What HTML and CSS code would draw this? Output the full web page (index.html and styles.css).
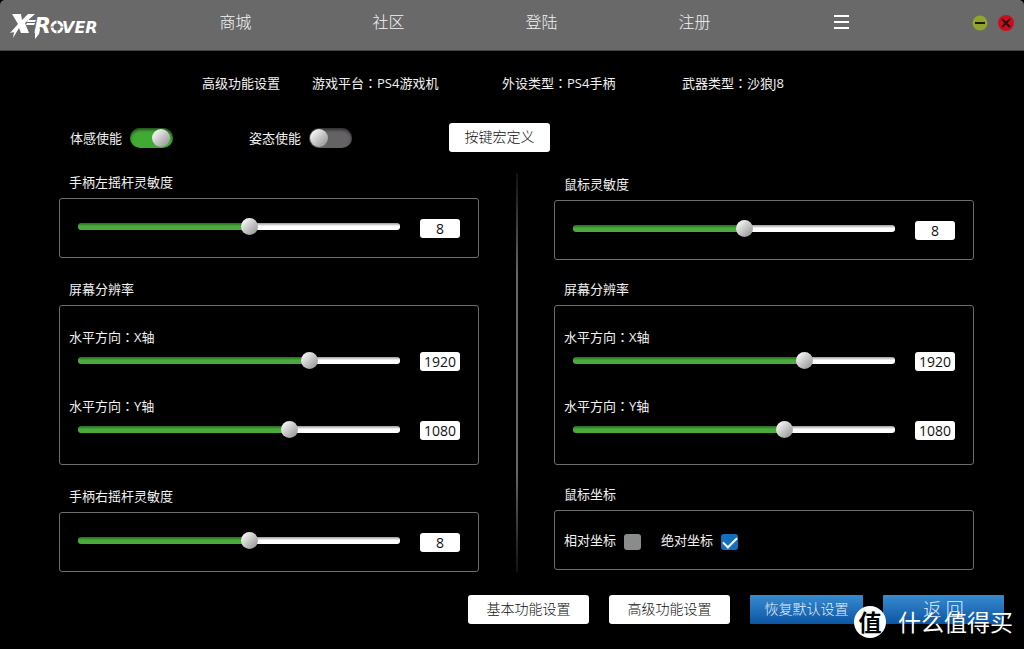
FILE: index.html
```html
<!DOCTYPE html>
<html lang="zh-CN">
<head>
<meta charset="utf-8">
<meta name="viewport" content="width=device-width, initial-scale=1">
<title>X-Rover 高级功能设置</title>
<link rel="stylesheet" href="styles.css">
</head>
<body>
<div class="app">
  <header class="topbar">
    <a class="logo" href="#" aria-label="X-Rover">
      <svg width="90" height="30" viewBox="0 0 90 30">
        <path class="logo-fill" d="M2 3h9l1 6 6-6h7l-10 9 4 10h-8l-2-5-6 10 1-6-4 1 8-9z"/>
        <path class="logo-fill" d="M17 12h8l-1 2h-8zM18 9h8l-1 2h-8z"/>
        <text class="logo-r" x="24" y="22">R</text>
        <path class="logo-fill" d="M25 18h5l-1 5-4 5z"/>
        <circle class="logo-ring" cx="47" cy="16" r="5"/>
        <path class="logo-cut" d="M47 8v6M47 18v6M39 16h6M49 16h6"/>
        <text class="logo-text" x="52" y="22">VER</text>
      </svg>
    </a>
    <nav class="nav">
      <a href="#">商城</a>
      <a href="#">社区</a>
      <a href="#">登陆</a>
      <a href="#">注册</a>
      <button class="menu" type="button" aria-label="菜单">
        <svg width="16" height="16" viewBox="0 0 16 16"><path d="M0 2h15M0 8h15M0 14h15"/></svg>
      </button>
    </nav>
    <div class="window-buttons">
      <button type="button" aria-label="最小化"><svg width="16" height="16" viewBox="0 0 16 16"><circle class="min" cx="8" cy="8" r="7.5"/><path d="M3 8h10"/></svg></button>
      <button type="button" aria-label="关闭"><svg width="16" height="16" viewBox="0 0 16 16"><circle class="close" cx="8" cy="8" r="8"/><path d="M4 4l8 8M12 4l-8 8"/></svg></button>
    </div>
  </header>

  <main class="main">
    <div class="info">
      <span>高级功能设置</span>
      <span>游戏平台<span class="colon" lang="zh-TW">：</span>PS4游戏机</span>
      <span>外设类型<span class="colon" lang="zh-TW">：</span>PS4手柄</span>
      <span>武器类型<span class="colon" lang="zh-TW">：</span>沙狼J8</span>
    </div>
    <div class="toggles">
      <label class="toggle">体感使能<input class="switch" type="checkbox" role="switch" checked></label>
      <label class="toggle">姿态使能<input class="switch" type="checkbox" role="switch"></label>
      <button class="btn macro" type="button">按键宏定义</button>
    </div>

    <div class="columns">
      <div class="column">
        <section class="group">
          <h2>手柄左摇杆灵敏度</h2>
          <div class="panel">
            <div class="row"><input class="slider" type="range" min="0" max="15" value="8" aria-label="手柄左摇杆灵敏度" style="--fill:53%"><input class="value" type="text" value="8" aria-label="手柄左摇杆灵敏度数值"></div>
          </div>
        </section>
        <section class="group">
          <h2>屏幕分辨率</h2>
          <div class="panel tall">
            <label for="lx">水平方向<span class="colon" lang="zh-TW">：</span>X轴</label>
            <div class="row"><input class="slider" id="lx" type="range" min="0" max="2627" value="1920" style="--fill:72%"><input class="value" type="text" value="1920" aria-label="X轴数值"></div>
            <label for="ly">水平方向<span class="colon" lang="zh-TW">：</span>Y轴</label>
            <div class="row"><input class="slider" id="ly" type="range" min="0" max="1623" value="1080" style="--fill:66%"><input class="value" type="text" value="1080" aria-label="Y轴数值"></div>
          </div>
        </section>
        <section class="group">
          <h2>手柄右摇杆灵敏度</h2>
          <div class="panel">
            <div class="row"><input class="slider" type="range" min="0" max="15" value="8" aria-label="手柄右摇杆灵敏度" style="--fill:53%"><input class="value" type="text" value="8" aria-label="手柄右摇杆灵敏度数值"></div>
          </div>
        </section>
      </div>

      <div class="divider"></div>

      <div class="column right">
        <section class="group">
          <h2>鼠标灵敏度</h2>
          <div class="panel">
            <div class="row"><input class="slider" type="range" min="0" max="15" value="8" aria-label="鼠标灵敏度" style="--fill:53%"><input class="value" type="text" value="8" aria-label="鼠标灵敏度数值"></div>
          </div>
        </section>
        <section class="group">
          <h2>屏幕分辨率</h2>
          <div class="panel tall">
            <label for="rx">水平方向<span class="colon" lang="zh-TW">：</span>X轴</label>
            <div class="row"><input class="slider" id="rx" type="range" min="0" max="2627" value="1920" style="--fill:72%"><input class="value" type="text" value="1920" aria-label="X轴数值"></div>
            <label for="ry">水平方向<span class="colon" lang="zh-TW">：</span>Y轴</label>
            <div class="row"><input class="slider" id="ry" type="range" min="0" max="1623" value="1080" style="--fill:66%"><input class="value" type="text" value="1080" aria-label="Y轴数值"></div>
          </div>
        </section>
        <section class="group">
          <h2>鼠标坐标</h2>
          <div class="panel checks">
            <label>相对坐标<input class="check" type="checkbox"></label>
            <label>绝对坐标<input class="check" type="checkbox" checked></label>
          </div>
        </section>
      </div>
    </div>
  </main>

  <footer class="actions">
    <button class="btn" type="button">基本功能设置</button>
    <button class="btn" type="button">高级功能设置</button>
    <button class="btn blue reset" type="button">恢复默认设置</button>
    <button class="btn blue back" type="button">返 回</button>
    <div class="watermark"><span class="badge">值</span><span>什么值得买</span></div>
  </footer>
</div>
</body>
</html>
```
FILE: styles.css
```css
* { box-sizing: border-box; }
body {
  margin: 0;
  background: #000;
  color: #f2f2f2;
  font: 13px/20px "Open Sans", "Noto Sans CJK SC", sans-serif;
}
button, input { font: inherit; margin: 0; }
button { padding: 0; border: 0; cursor: pointer; }
.app { min-height: 100vh; display: flex; flex-direction: column; }
.colon { font-family: "Noto Sans CJK TC", sans-serif; line-height: 1; }

.topbar {
  display: flex;
  align-items: center;
  height: 51px;
  padding: 0 10px;
  background: #696969;
  border-bottom: 1px solid #444;
  border-radius: 5px 5px 0 0;
}
.logo { flex: 0 0 149px; height: 30px; margin-top: 2px; }
.logo svg { display: block; }
.logo-fill { fill: #fff; }
.logo-r, .logo-text { fill: #fff; font: italic 700 22px "DejaVu Sans", sans-serif; }
.logo-text { font-size: 16px; }
.logo-ring { fill: none; stroke: #fff; stroke-width: 3; }
.logo-cut { stroke: #696969; stroke-width: 1; }
.nav { flex: 1; display: flex; align-items: center; padding-bottom: 6px; }
.nav a, .menu { flex: 0 1 153px; text-align: center; }
.nav a { color: #f4f4f4; font-size: 16px; font-weight: 300; text-decoration: none; }
.menu { height: 20px; padding-right: 12px; background: none; }
.menu svg { display: block; margin: 2px auto; }
.menu path { stroke: #fff; stroke-width: 2; }
.window-buttons { display: flex; gap: 10px; padding-bottom: 5px; }
.window-buttons button { height: 16px; background: none; }
.window-buttons svg { display: block; }
.window-buttons path { stroke: #211; stroke-width: 2; fill: none; }
.min { fill: #90a52b; }
.close { fill: #d20a20; }

.main { padding: 22px 50px 0 59px; }
.info { display: grid; grid-template-columns: 110px 190px 180px auto; padding-left: 143px; white-space: nowrap; }
.toggles { display: flex; align-items: center; padding-left: 11px; margin-top: 30px; }
.toggle { display: flex; align-items: center; gap: 8px; width: 179px; }
.switch {
  appearance: none;
  width: 43px;
  height: 20px;
  border-radius: 10px;
  background: #646264;
  box-shadow: inset 0 2px 3px #0008;
}
.switch::before {
  content: "";
  display: block;
  width: 18px;
  height: 18px;
  margin: 1px;
  border-radius: 50%;
  background: linear-gradient(135deg, #f4f4f4 15%, #c8c8c8 50%, #8c8c8c);
}
.switch:checked { background: #41aa35; }
.switch:checked::before { margin-left: 22px; }

.btn {
  height: 29px;
  width: 121px;
  padding-bottom: 2px;
  border-radius: 3px;
  background: #fff;
  color: #111;
  font-size: 14px;
  font-weight: 300;
}
.macro { width: 101px; margin-left: 21px; }

.columns { display: grid; grid-template-columns: 1fr 75px 1fr; margin-top: 21px; }
.divider {
  justify-self: center;
  width: 2px;
  background: linear-gradient(#111, #666 25%, #666 75%, #111);
}
.group + .group { margin-top: 22px; }
.right { padding-top: 2px; }
.right .group + .group { margin-top: 20px; }
.group h2 { margin: 0; padding: 0 0 6px 10px; font-size: 13px; font-weight: 400; line-height: 19px; }
.panel {
  min-height: 60px;
  padding: 19px 18px 0;
  border: 1px solid #6c6c6c;
  border-radius: 3px;
}
.tall { min-height: 160px; padding-top: 21px; }
.tall label { display: block; height: 24px; margin-left: -9px; }
.tall .row + label { margin-top: 25px; }
.row { display: flex; align-items: flex-end; gap: 20px; height: 20px; }
.slider {
  appearance: none;
  flex: 1;
  min-width: 0;
  height: 17px;
  margin-bottom: 3px;
  background: none;
}
.tall .slider { margin-bottom: 2px; }
.slider::-webkit-slider-runnable-track {
  height: 7px;
  border-radius: 3px;
  background: linear-gradient(#0006, #0000 45%), linear-gradient(90deg, #48ab3c var(--fill), #fff var(--fill));
}
.slider::-webkit-slider-thumb {
  appearance: none;
  width: 17px;
  height: 17px;
  margin-top: -5px;
  border-radius: 50%;
  background: linear-gradient(135deg, #f4f4f4 15%, #c8c8c8 50%, #8c8c8c);
}
.value {
  width: 40px;
  height: 19px;
  padding: 0;
  border: 0;
  border-radius: 3px;
  background: #fff;
  color: #111;
  font-size: 14px;
  line-height: 19px;
  text-align: center;
}
.checks { display: flex; align-items: flex-start; gap: 20px; padding-left: 9px; }
.checks label { display: flex; gap: 8px; }
.check {
  appearance: none;
  width: 17px;
  height: 16px;
  margin-top: 4px;
  border-radius: 3px;
  background: #898c8b;
}
.check:checked { background: #1270bd; }
.check:checked::before {
  content: "";
  display: block;
  width: 12px;
  height: 6px;
  margin: 3px 2px;
  border: solid #fff;
  border-width: 0 0 2px 2px;
  transform: rotate(-45deg);
}

.actions {
  position: relative;
  display: flex;
  justify-content: flex-end;
  gap: 20px;
  padding: 23px 20px 0;
}
.blue { border-radius: 1px; background: linear-gradient(#388bce, #0b55a5); color: #e4effa; }
.reset { width: 113px; }
.back { font-size: 18px; }
.watermark {
  position: absolute;
  right: 11px;
  top: 34px;
  display: flex;
  align-items: center;
  gap: 12px;
  color: #fff;
  font-size: 23px;
  line-height: 32px;
}
.badge {
  width: 32px;
  height: 32px;
  border-radius: 50%;
  background: #fff;
  color: #000;
  font-weight: 700;
  text-align: center;
}
```
